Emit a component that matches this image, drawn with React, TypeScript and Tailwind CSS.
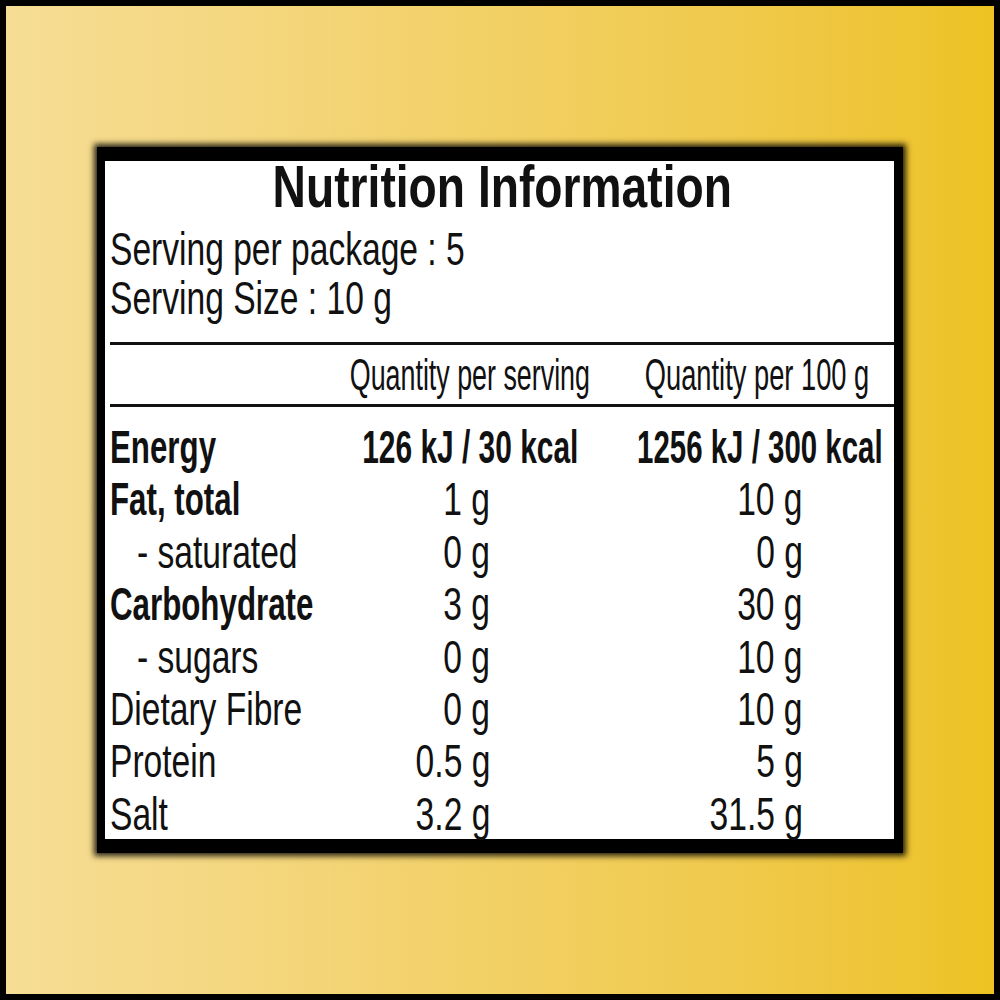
import React from 'react';

type Row = { label: string; bold?: boolean; sub?: boolean; perServing: string; per100: string; energy?: boolean };

const rows: Row[] = [
  { label: 'Energy', bold: true, energy: true, perServing: '126 kJ / 30 kcal', per100: '1256 kJ / 300 kcal' },
  { label: 'Fat, total', bold: true, perServing: '1 g', per100: '10 g' },
  { label: '- saturated', sub: true, perServing: '0 g', per100: '0 g' },
  { label: 'Carbohydrate', bold: true, perServing: '3 g', per100: '30 g' },
  { label: '- sugars', sub: true, perServing: '0 g', per100: '10 g' },
  { label: 'Dietary Fibre', perServing: '0 g', per100: '10 g' },
  { label: 'Protein', perServing: '0.5 g', per100: '5 g' },
  { label: 'Salt', perServing: '3.2 g', per100: '31.5 g' },
];

export default function App() {
  return (
    <div className="w-[1000px] h-[1000px] border-[6px] border-black bg-gradient-to-r from-[#f6dd95] via-[#f2d064] to-[#edc222] pl-[91px] pt-[141px] font-['Liberation_Sans',Arial,sans-serif] text-[#111]">
      {/* label box */}
      <div className="w-[806px] bg-black border-black border-l-[8px] border-t-[14px] border-r-[9px] border-b-[14px] shadow-[0_0_6px_3px_rgba(0,0,0,0.85)]">
        <div className="bg-white h-[678px] pl-[5px]">
          <div className="h-[52px] leading-[52px] text-[60px] font-bold text-center">
            <span className="inline-block scale-x-[0.77] origin-center whitespace-nowrap">Nutrition Information</span>
          </div>
          <div className="mt-[12px] text-[46px] leading-[49px]">
            <div><span className="inline-block scale-x-[0.73] origin-left whitespace-nowrap">Serving per package : 5</span></div>
            <div><span className="inline-block scale-x-[0.73] origin-left whitespace-nowrap">Serving Size : 10 g</span></div>
          </div>

          <div className="mt-[19px] h-[3px] bg-[#111]" />
          <div className="grid grid-cols-[230px_260px_minmax(0,1fr)] h-[59px] leading-[59px] text-[44px]">
            <div />
            <div className="flex justify-center min-w-0">
              <span className="inline-block scale-x-[0.61] origin-center whitespace-nowrap">Quantity per serving</span>
            </div>
            <div className="flex justify-center min-w-0 pl-[20px]">
              <span className="inline-block scale-x-[0.62] origin-center whitespace-nowrap">Quantity per 100 g</span>
            </div>
          </div>
          <div className="h-[3px] bg-[#111]" />

          <div className="mt-[14px] text-[46px] leading-[52.4px]">
            {rows.map((r) => (
              <div key={r.label} className="grid grid-cols-[230px_260px_minmax(0,1fr)]">
                <div className={r.sub ? 'pl-[27px]' : ''}>
                  <span
                    className={
                      r.bold
                        ? 'inline-block scale-x-[0.68] origin-left whitespace-nowrap font-bold'
                        : 'inline-block scale-x-[0.73] origin-left whitespace-nowrap'
                    }
                  >
                    {r.label}
                  </span>
                </div>
                {r.energy ? (
                  <>
                    <div className="flex justify-center min-w-0 font-bold">
                      <span className="inline-block scale-x-[0.65] origin-center whitespace-nowrap">{r.perServing}</span>
                    </div>
                    <div className="flex justify-center min-w-0 font-bold pl-[26px]">
                      <span className="inline-block scale-x-[0.64] origin-center whitespace-nowrap">{r.per100}</span>
                    </div>
                  </>
                ) : (
                  <>
                    <div className="text-right pr-[110px]">
                      <span className="inline-block scale-x-[0.73] origin-right whitespace-nowrap">{r.perServing}</span>
                    </div>
                    <div className="text-right pr-[91px]">
                      <span className="inline-block scale-x-[0.73] origin-right whitespace-nowrap">{r.per100}</span>
                    </div>
                  </>
                )}
              </div>
            ))}
          </div>
        </div>
      </div>
    </div>
  );
}
